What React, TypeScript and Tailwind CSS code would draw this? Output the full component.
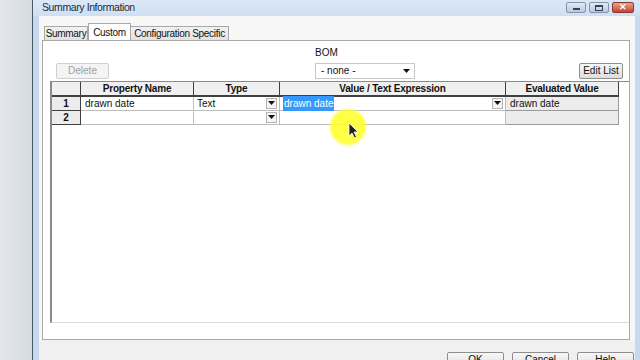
import React from "react";

const font = { fontFamily: '"Liberation Sans", Arial, sans-serif' };

const Arrow = () => (
  <span className="flex h-[11px] w-[11px] items-center justify-center border border-[#b5b5b5] bg-[#f4f4f4]">
    <svg width="7" height="4" viewBox="0 0 7 4">
      <path d="M0 0h7L3.5 4z" fill="#111" />
    </svg>
  </span>
);

const HeadCell = ({ w, children }: { w: string; children?: React.ReactNode }) => (
  <div className={`${w} flex h-[15px] items-center justify-center border-r border-b-2 border-[#404040] bg-[#f0f0f0] text-[10px] font-bold tracking-[-0.2px] text-[#111]`}>
    {children}
  </div>
);

const Row = ({ n, name, type, value, evald, selected }: { n: string; name?: string; type?: string; value?: string; evald?: string; selected?: boolean }) => (
  <div className="flex h-[14px] text-[10px] text-[#111]">
    <div className="flex w-[29px] items-center justify-center border-r border-b border-[#404040] bg-[#ececec] font-bold">{n}</div>
    <div className="flex w-[113px] items-center border-r border-b border-[#bdbdbd] bg-white pl-[4px]">{name}</div>
    <div className="flex w-[86px] items-center justify-between border-r border-b border-[#bdbdbd] bg-white pl-[3px] pr-[2px]">
      <span>{type}</span>
      <Arrow />
    </div>
    <div className="flex w-[226px] items-center justify-between border-r border-b border-[#bdbdbd] bg-white pl-[3px] pr-[2px]">
      {selected ? <span className="bg-[#3399ff] px-[1px] text-white">{value}</span> : <span />}
      {selected ? <Arrow /> : null}
    </div>
    <div className="flex w-[113px] items-center border-r border-b border-[#9a9a9a] bg-[#ececec] pl-[4px]">{evald}</div>
  </div>
);

const Btn = ({ w, children, disabled }: { w: string; children: React.ReactNode; disabled?: boolean }) => (
  <div className={`${w} flex h-[16px] items-center justify-center rounded-[2px] border ${disabled ? "border-[#cfcfcf] bg-[#f4f4f4] text-[#a0a0a0]" : "border-[#8e8e8e] bg-gradient-to-b from-[#f7f7f7] to-[#dedede] text-[#111]"} text-[10px]`}>
    {children}
  </div>
);

export default function App() {
  return (
    <div className="relative flex h-[360px] w-[640px] overflow-hidden bg-[#dfe3e8]" style={font}>
      {/* desktop strip */}
      <div className="w-[32px] bg-gradient-to-r from-[#e4e7ec] to-[#d6dbe2]" />

      {/* window */}
      <div className="flex flex-1 flex-col border-l border-[#4a5866] bg-[#c6d9ef]">
        {/* title bar */}
        <div className="flex h-[20px] items-center justify-between bg-gradient-to-b from-[#dce8f6] to-[#cfdff2] pl-[9px] pr-[6px]">
          <span className="text-[10.5px] tracking-[-0.4px] text-[#1e2a38]">Summary Information</span>
          <div className="flex items-center gap-[3px]">
            <div className="flex h-[11px] w-[20px] items-center justify-center rounded-[2px] border border-[#7f93ad] bg-gradient-to-b from-[#e3ebf5] to-[#b9c9dc]">
              <div className="mt-[3px] h-[2px] w-[7px] bg-[#33445a]" />
            </div>
            <div className="flex h-[11px] w-[20px] items-center justify-center rounded-[2px] border border-[#7f93ad] bg-gradient-to-b from-[#e3ebf5] to-[#b9c9dc]">
              <div className="h-[6px] w-[8px] border border-t-2 border-[#33445a]" />
            </div>
            <div className="flex h-[11px] w-[22px] items-center justify-center rounded-[2px] border border-[#8a3a2e] bg-gradient-to-b from-[#e9a08e] to-[#c2422c] text-[9px] font-bold leading-none text-white">
              ✕
            </div>
          </div>
        </div>

        {/* client area */}
        <div className="ml-[6px] mr-[5px] flex flex-1 flex-col bg-[#f0f0f0]">
          <div className="flex flex-col bg-[#f7f7f7] pl-[3px] pr-[5px] pt-[7px]">
            {/* tabs */}
            <div className="flex items-end pl-[2px] text-[10px] tracking-[-0.3px] text-[#111]">
              <div className="flex h-[14px] w-[44px] items-center justify-center border border-b-0 border-[#a8a8a8] bg-gradient-to-b from-[#f2f2f2] to-[#e2e2e2]">Summary</div>
              <div className="-mb-px flex h-[18px] w-[43px] items-center justify-center border border-b-0 border-[#a8a8a8] bg-white">Custom</div>
              <div className="flex h-[14px] w-[98px] items-center justify-center border border-b-0 border-l-0 border-[#a8a8a8] bg-gradient-to-b from-[#f2f2f2] to-[#e2e2e2]">Configuration Specific</div>
            </div>

            {/* panel */}
            <div className="flex h-[300px] flex-col border border-[#a8a8a8] bg-white pl-[7px]">
              <div className="flex h-[40px] items-end pb-[2px] pr-[6px]">
                <div className="ml-[6px]">
                  <Btn w="w-[53px]" disabled>Delete</Btn>
                </div>
                <div className="ml-[206px] flex flex-col">
                  <span className="mb-[3px] text-[10px] text-[#111]">BOM</span>
                  <div className="flex h-[16px] w-[100px] items-center justify-between border border-[#c8c8c8] bg-white pl-[5px] pr-[4px] text-[10px] text-[#111]">
                    <span>- none -</span>
                    <svg width="7" height="4" viewBox="0 0 7 4">
                      <path d="M0 0h7L3.5 4z" fill="#111" />
                    </svg>
                  </div>
                </div>
                <div className="ml-auto">
                  <Btn w="w-[44px]">Edit List</Btn>
                </div>
              </div>

              {/* grid */}
              <div className="flex h-[242px] flex-col border-t border-l-2 border-b border-[#8a8a8a] border-b-[#dcdcdc]">
                <div className="flex">
                  <HeadCell w="w-[29px]" />
                  <HeadCell w="w-[113px]">Property Name</HeadCell>
                  <HeadCell w="w-[86px]">Type</HeadCell>
                  <HeadCell w="w-[226px]">Value / Text Expression</HeadCell>
                  <HeadCell w="w-[113px]">Evaluated Value</HeadCell>
                </div>
                <Row n="1" name="drawn date" type="Text" value="drawn date" evald="drawn date" selected />
                <div className="flex h-[14px] text-[10px] text-[#111]">
                  <div className="flex w-[29px] items-center justify-center border-r border-b border-[#404040] bg-[#ececec] font-bold">2</div>
                  <div className="w-[113px] border-r border-b border-[#bdbdbd] bg-white" />
                  <div className="flex w-[86px] items-center justify-end border-r border-b border-[#bdbdbd] bg-white pr-[2px]">
                    <Arrow />
                  </div>
                  <div className="w-[226px] border-r border-b border-[#bdbdbd] bg-white" />
                  <div className="w-[113px] border-r border-b border-[#9a9a9a] bg-[#ececec]" />
                </div>
              </div>
            </div>
          </div>

          {/* bottom buttons */}
          <div className="flex justify-end gap-[8px] pr-[1px] pt-[12px]">
            <Btn w="w-[57px]">OK</Btn>
            <Btn w="w-[57px]">Cancel</Btn>
            <Btn w="w-[57px]">Help</Btn>
          </div>
        </div>
      </div>

      {/* cursor highlight */}
      <div className="pointer-events-none absolute left-[330px] top-[109px] h-[36px] w-[36px] rounded-full bg-[#ffff33] opacity-90 blur-[1px]" />
      <svg className="pointer-events-none absolute left-[348px] top-[122px]" width="11" height="17" viewBox="0 0 11 17">
        <path d="M1 1v13l3-3 2.5 5 2-1-2.5-5h4z" fill="#222" stroke="#fff" strokeWidth="0.8" />
      </svg>
    </div>
  );
}
